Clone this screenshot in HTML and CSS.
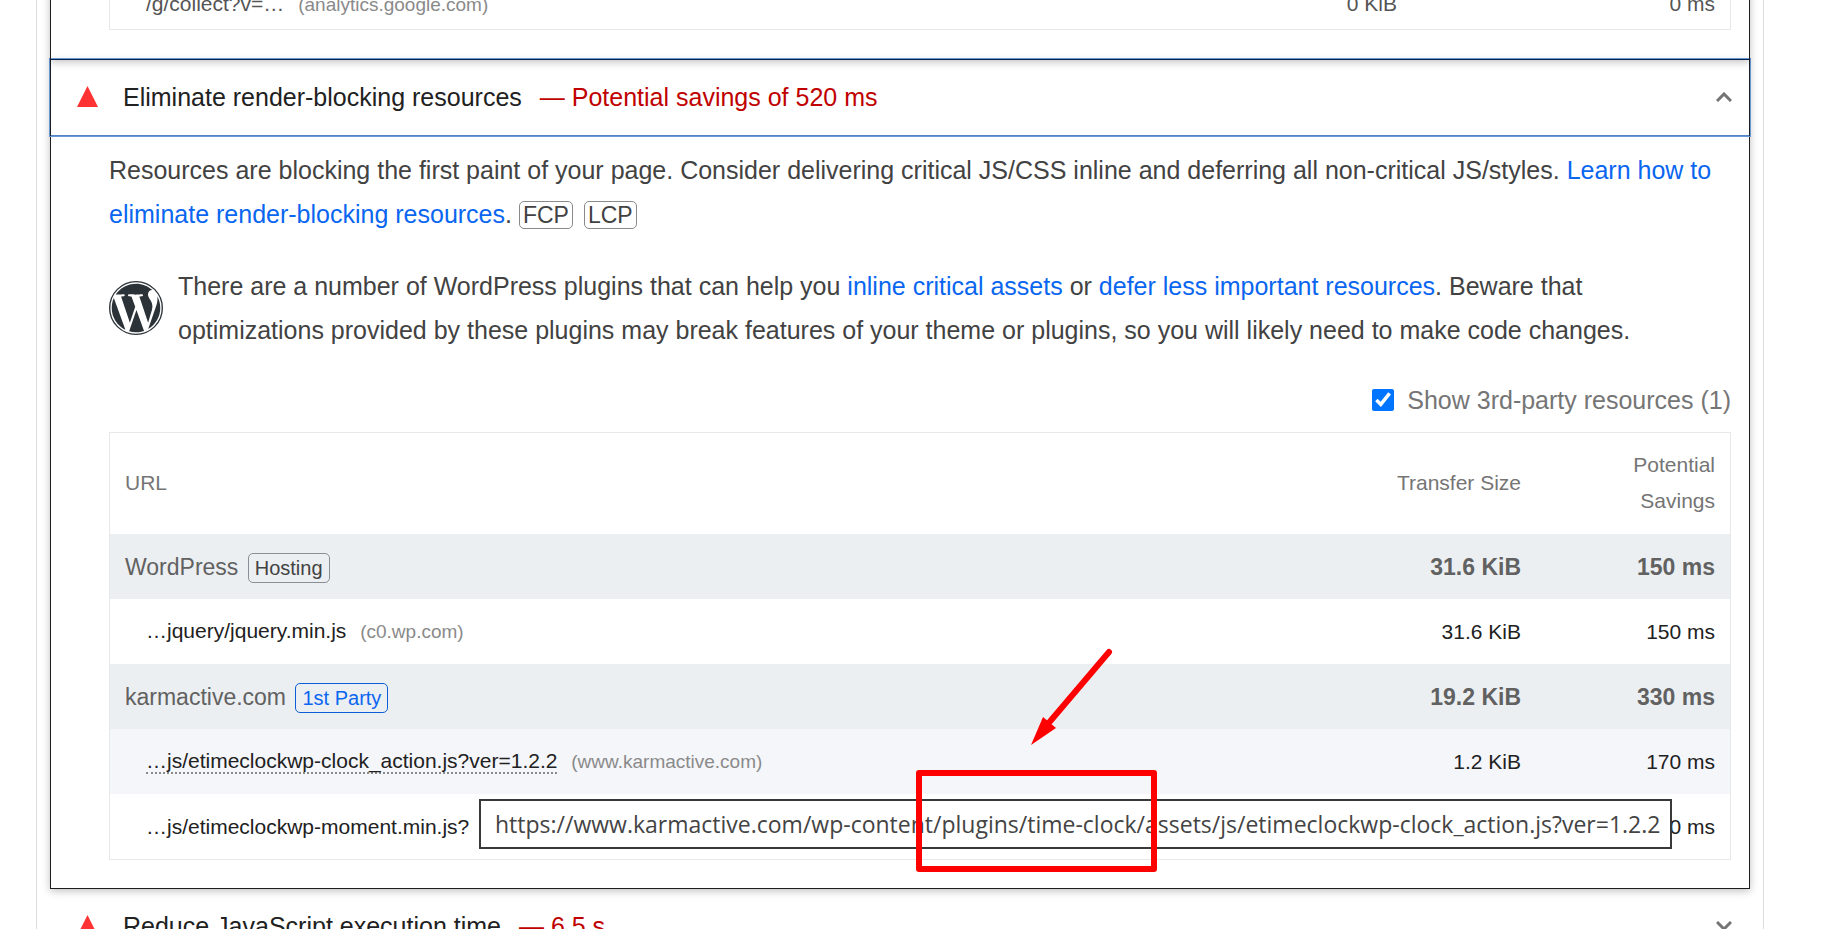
FILE: index.html
```html
<!DOCTYPE html>
<html lang="en">

<head>
    <meta charset="UTF-8">
    <meta name="viewport" content="width=device-width, initial-scale=1.0">
    <title>Diagnostics</title>
    <link rel="stylesheet" href="styles.css">
</head>

<body>
    <main class="report">
        <details class="audit audit-first" open>
            <summary class="audit-header">Reduce unused JavaScript</summary>
            <div class="audit-body">
                <table class="table">
                    <tbody>
                        <tr class="short muted">
                            <td class="sub"><a href="#" class="url">/g/collect?v=…</a> <span class="host">(analytics.google.com)</span></td>
                            <td class="num">0 KiB</td>
                            <td class="num wide">0 ms</td>
                        </tr>
                    </tbody>
                </table>
            </div>
        </details>

        <details class="audit" open>
            <summary class="audit-header focused">
                <svg class="fail" viewBox="0 0 21 21" aria-hidden="true"><path d="M10.5 0L21 21H0z" /></svg>
                <span class="title">Eliminate render-blocking resources</span>
                <span class="savings">— Potential savings of 520 ms</span>
                <svg class="chevron" viewBox="0 0 16 10" aria-hidden="true"><path d="M1 9l7-7 7 7" /></svg>
            </summary>
            <div class="audit-body">
                <p class="text">Resources are blocking the first paint of your page. Consider delivering critical JS/CSS inline and deferring all non-critical JS/styles. <a href="#">Learn how to eliminate render-blocking resources</a>. <span class="metric">FCP</span> <span class="metric">LCP</span></p>

                <div class="stack">
                    <svg class="wp" viewBox="0 0 24 24" aria-hidden="true">
                        <circle cx="12" cy="12" r="11.7" />
                        <path d="M21.469 6.825c.84 1.537 1.318 3.3 1.318 5.175 0 3.979-2.156 7.456-5.363 9.325l3.295-9.527c.615-1.54.82-2.771.82-3.864 0-.405-.026-.78-.07-1.11z" />
                        <path d="M13.488 6.93c.647-.03 1.232-.105 1.232-.105.582-.075.514-.93-.067-.899 0 0-1.755.135-2.88.135-1.064 0-2.85-.15-2.85-.15-.585-.03-.661.855-.075.885 0 0 .54.061 1.125.09l1.68 4.605-2.37 7.08L5.354 6.9c.649-.03 1.234-.1 1.234-.1.585-.075.516-.93-.065-.896 0 0-1.746.138-2.874.138-.2 0-.438-.008-.69-.015C4.911 3.15 8.235 1.215 12 1.215c2.809 0 5.365 1.072 7.286 2.833-.046-.003-.091-.009-.141-.009-1.06 0-1.812.923-1.812 1.914 0 .89.513 1.643 1.06 2.531.411.72.89 1.643.89 2.977 0 .915-.354 1.994-.821 3.479l-1.075 3.585-3.9-11.61z" />
                        <path d="M12 22.784c-1.059 0-2.081-.153-3.048-.437l3.237-9.406 3.315 9.087c.024.053.05.101.078.149-1.12.393-2.325.609-3.582.609z" />
                        <path d="M1.211 12c0-1.564.336-3.05.935-4.39L7.29 21.709C3.694 19.96 1.212 16.271 1.211 12z" />
                    </svg>
                    <p class="text">There are a number of WordPress plugins that can help you <a href="#">inline critical assets</a> or <a href="#">defer less important resources</a>. Beware that optimizations provided by these plugins may break features of your theme or plugins, so you will likely need to make code changes.</p>
                </div>

                <div class="filter">
                    <input type="checkbox" id="third-party" checked>
                    <label for="third-party">Show 3rd-party resources (1)</label>
                </div>

                <table class="table">
                    <thead>
                        <tr>
                            <th>URL</th>
                            <th class="num">Transfer Size</th>
                            <th class="num">Potential<br>Savings</th>
                        </tr>
                    </thead>
                    <tbody>
                        <tr class="group">
                            <td>WordPress <span class="tag">Hosting</span></td>
                            <td class="num">31.6 KiB</td>
                            <td class="num">150 ms</td>
                        </tr>
                        <tr>
                            <td class="sub"><a href="#" class="url">…jquery/jquery.min.js</a> <span class="host">(c0.wp.com)</span></td>
                            <td class="num">31.6 KiB</td>
                            <td class="num">150 ms</td>
                        </tr>
                        <tr class="group">
                            <td>karmactive.com <span class="tag first-party">1st Party</span></td>
                            <td class="num">19.2 KiB</td>
                            <td class="num">330 ms</td>
                        </tr>
                        <tr class="hovered">
                            <td class="sub">
                                <a href="#" class="url">…js/etimeclockwp-clock_action.js?ver=1.2.2</a> <span class="host">(www.karmactive.com)</span>
                                <!-- full address with the plugin folder marked -->
                                <div class="tooltip">https://www.karmactive.com/wp-content/plugins/time-clock/assets/js/etimeclockwp-clock_action.js?ver=1.2.2
                                    <svg class="marker" viewBox="0 0 250 230" aria-hidden="true">
                                        <rect x="9" y="127" width="235" height="96" />
                                        <path class="shaft" d="M199 6L137 79" />
                                        <path class="head" d="M121 99l12-28 13 11z" />
                                    </svg>
                                </div>
                            </td>
                            <td class="num">1.2 KiB</td>
                            <td class="num">170 ms</td>
                        </tr>
                        <tr>
                            <td class="sub"><a href="#" class="url">…js/etimeclockwp-moment.min.js?</a></td>
                            <td class="num"></td>
                            <td class="num">0 ms</td>
                        </tr>
                    </tbody>
                </table>
            </div>
        </details>

        <details class="audit">
            <summary class="audit-header">
                <svg class="fail" viewBox="0 0 21 21" aria-hidden="true"><path d="M10.5 0L21 21H0z" /></svg>
                <span class="title">Reduce JavaScript execution time</span>
                <span class="savings">— 6.5 s</span>
                <svg class="chevron" viewBox="0 0 16 10" aria-hidden="true"><path d="M1 1l7 7 7-7" /></svg>
            </summary>
        </details>
    </main>
</body>

</html>
```
FILE: styles.css
```css
* {
    margin: 0;
    padding: 0;
    box-sizing: border-box;
}

body {
    height: 100vh;
    padding: 0 75px 0 36px;
    overflow: hidden;
    background-color: white;
    font-family: "Liberation Sans", Arial, sans-serif;
    font-size: 25px;
    line-height: 44px;
    color: #212121;
}

a {
    color: #0a66f0;
    text-decoration: none;
}

.report {
    min-height: 100vh;
    padding: 0 14px;
    border: solid #dadce0;
    border-width: 0 1px;
}

.audit {
    position: relative;
}

.audit[open] {
    margin: 0 -1px;
    border: 1px solid #1b1e20;
    border-top: 0;
    box-shadow: 0 2px 8px rgba(0, 0, 0, 0.25);
}

/* the page is scrolled to the end of this audit */
.audit-first {
    z-index: 1;
}

.audit-first[open] {
    border-bottom-color: #04204f;
}

.audit-first .audit-header {
    display: none;
}

.audit-first .audit-body {
    margin-top: -35px;
    padding-bottom: 29px;
}

.audit-header {
    display: flex;
    align-items: center;
    height: 75px;
    padding: 0 17px 2px 26px;
    list-style: none;
    cursor: pointer;
}

.focused {
    outline: 1px solid #6b98d6;
    outline-offset: 1px;
    box-shadow: 0 1px 0 #5583c4;
}

.fail {
    width: 21px;
    height: 21px;
    margin-right: 25px;
    fill: #ff3333;
}

.savings {
    margin-left: 18px;
    color: #c00000;
}

.chevron {
    width: 16px;
    height: 10px;
    margin-left: auto;
    fill: none;
    stroke: #757575;
    stroke-width: 3;
}

.audit-body {
    padding: 13px 18px 28px 58px;
}

.text {
    color: #424242;
}

.metric {
    padding: 0 3px;
    margin-right: 4px;
    border: 1px solid #8a8a8a;
    border-radius: 5px;
    font-size: 23px;
}

.stack {
    display: flex;
    align-items: center;
    gap: 15px;
    margin: 27px 0 26px;
}

.wp {
    flex: none;
    width: 54px;
    height: 54px;
    fill: #2c3338;
}

.wp circle {
    fill: none;
    stroke: #2c3338;
    stroke-width: 0.6;
}

.filter {
    display: flex;
    justify-content: flex-end;
    align-items: center;
    gap: 13px;
    margin-bottom: 10px;
    color: #757575;
}

.filter input {
    width: 22px;
    height: 22px;
}

.table {
    width: 100%;
    border: 1px solid #e6e8ea;
    border-spacing: 0;
    font-size: 21px;
    line-height: 36px;
}

.table th,
.table td {
    height: 65px;
    padding: 0 15px;
    text-align: left;
}

.table th {
    height: 101px;
    padding-bottom: 2px;
    font-weight: normal;
    color: #757575;
}

.table .num {
    width: 194px;
    text-align: right;
}

.table .wide {
    width: 318px;
}

.table .short td {
    height: 50px;
}

.table .sub {
    padding-left: 36px;
}

.table .muted,
.table .muted .url {
    color: #555555;
}

.group {
    background-color: #eceff2;
    font-size: 23px;
    color: #616161;
}

.group .num {
    font-weight: bold;
}

.url {
    color: #212121;
}

.host {
    margin-left: 8px;
    font-size: 19px;
    color: #8a8a8a;
}

.tag {
    display: inline-block;
    margin-left: 3px;
    padding: 0 6px;
    border: 1px solid #8a8f94;
    border-radius: 5px;
    font-size: 20px;
    line-height: 28px;
    color: #424242;
}

.first-party {
    border-color: #0a5fd8;
    color: #0a66f0;
}

.hovered {
    background-color: #f5f6fa;
}

.hovered .sub {
    position: relative;
}

.hovered .url {
    border-bottom: 2px dotted #8a8a8a;
}

.tooltip {
    position: absolute;
    top: 70px;
    left: 369px;
    z-index: 2;
    padding: 0 10px 0 14px;
    border: 2px solid #38393b;
    background-color: white;
    font-family: "Open Sans", "Noto Sans", sans-serif;
    font-size: 23px;
    line-height: 46px;
    white-space: nowrap;
    color: #444444;
}

.marker {
    position: absolute;
    top: -155px;
    left: 429px;
    width: 250px;
    height: 230px;
    fill: none;
    stroke: #ff0000;
    stroke-width: 6;
    stroke-linejoin: round;
}

.shaft {
    stroke-linecap: round;
}

.head {
    fill: #ff0000;
    stroke: none;
}
```
